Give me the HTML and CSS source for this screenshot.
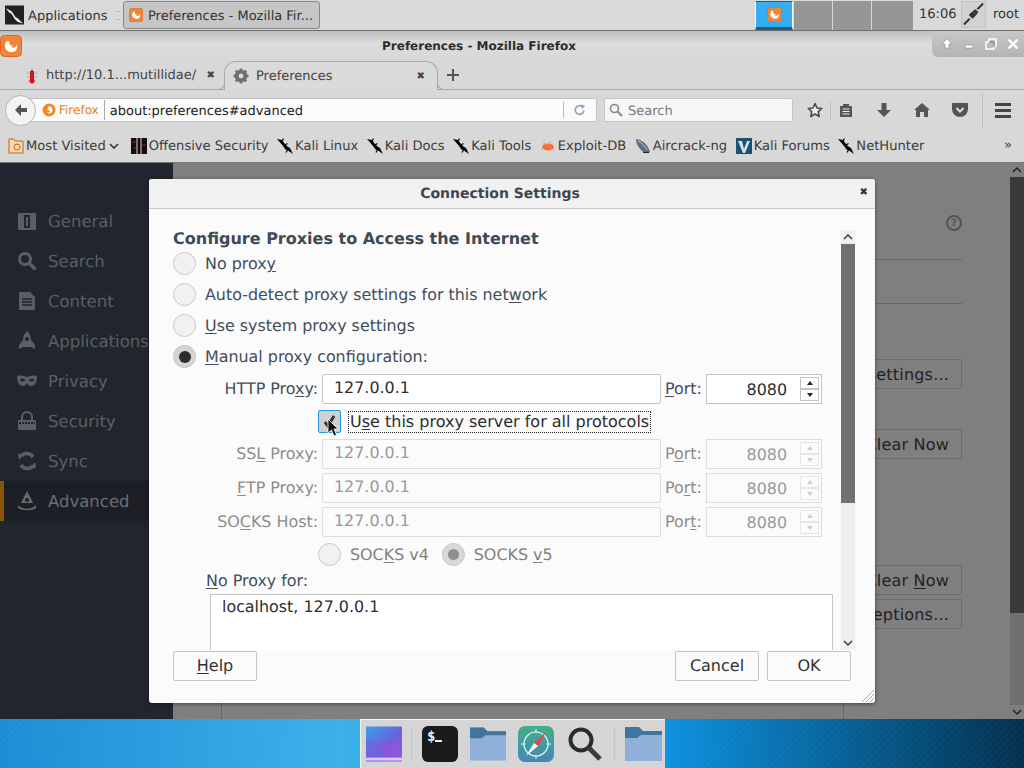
FILE: index.html
```html
<!DOCTYPE html>
<html lang="en">
<head>
<meta charset="utf-8">
<title>Preferences - Mozilla Firefox</title>
<link rel="stylesheet" href="styles.css">
</head>
<body>
<svg class="defs" width="0" height="0" aria-hidden="true">
  <symbol id="fx" viewBox="0 0 22 22">
    <rect x="0.5" y="0.5" width="21" height="21" rx="4" fill="#f0853a" stroke="#d9682a"/>
    <path d="M8 5C4.500 7 4 12 6.500 15c3 3 8 3 10-.5 1-1.800 1-3.500.3-5.200-.3 1.500-1 2.500-2 3-1.500.9-3.500.4-4-1 1 .4 2 .2 2.300-.6-1-.6-2.400-.8-3.200-.2-.2-1.300.2-3.100-1.900-5.500z" fill="#fff"/>
  </symbol>
  <symbol id="kali" viewBox="0 0 16 16">
    <path d="M0 1l5 1 3 4 2.500 2.500L13 10l3 6-5-3.500-2.500-1-2.500-3.500L3.500 5z" fill="#000"/>
    <path d="M5 3l1.500-2.500M8 7l2.500-1.500M10.500 12l-1.500 2.500" stroke="#000" stroke-width="1.200" fill="none"/>
  </symbol>
  <symbol id="folder" viewBox="0 0 37 36">
    <path d="M0 1h14l4 4h19v30H0z" fill="#8fb0d8"/>
    <path d="M0 1h14l4 4h19v4H16l-4 3H0z" fill="#3f759f"/>
  </symbol>
</svg>

<div class="desktop">
  <header class="panel">
    <div class="apps">
      <svg class="apps-icon" viewBox="0 0 20 20"><rect width="20" height="20" fill="#222"/><path d="M1 3l6 3 4 6 3 2 5 5-6-2-3-3-3-5-3-2z" fill="#eee"/></svg>
      <span>Applications</span>
    </div>
    <div class="grip"></div>
    <div class="task"><svg class="task-icon"><use href="#fx"/></svg><span>Preferences - Mozilla Fir...</span></div>
    <div class="pager">
      <div class="ws ws-on"><svg class="ws-icon"><use href="#fx"/></svg></div>
      <div class="ws"></div>
      <div class="ws"></div>
      <div class="ws ws-last"></div>
    </div>
    <div class="clock">16:06</div>
    <div class="plug"><svg viewBox="0 0 24 24" width="23" height="24"><path d="M22 1l-6 6M2 23l6-6" stroke="#333" stroke-width="2"/><path d="M7 13l4-4 4 4-4 4z" fill="#333"/><path d="M11 9l3-2 3 3-2 3z" fill="#333"/></svg></div>
    <div class="user">root</div>
  </header>

  <main class="window">
    <div class="titlebar">
      <svg class="title-icon"><use href="#fx"/></svg>
      <div class="title">Preferences - Mozilla Firefox</div>
      <div class="wm">
        <svg viewBox="0 0 12 12" width="12" height="12"><path d="M6 1l5 5H8v4H4V6H1z" fill="#fff" stroke="#777" stroke-width=".5"/></svg>
        <svg viewBox="0 0 12 12" width="12" height="12"><rect x="2" y="7" width="8" height="3" fill="#fff" stroke="#777" stroke-width=".5"/></svg>
        <svg viewBox="0 0 12 12" width="12" height="12"><path d="M4 1h7v7H9v3H1V4h3z" fill="none" stroke="#fff" stroke-width="1.500"/><path d="M4 4h5v5" fill="none" stroke="#777"/></svg>
        <svg viewBox="0 0 12 12" width="12" height="12"><path d="M1.500 1.500l9 9M10.500 1.500l-9 9" stroke="#fff" stroke-width="2.400"/></svg>
      </div>
    </div>

    <div class="tabs">
      <div class="tab">
        <svg class="tab-favicon" viewBox="0 0 12 16"><path d="M6 1v14" stroke="#444" stroke-width="1"/><path d="M1 5h10M1 9h10M2 13h8" stroke="#aaa"/><rect x="4" y="3" width="4" height="9" fill="#d81018"/><circle cx="6" cy="13" r="2.500" fill="#d81018"/></svg>
        <span class="tab-text">http://10.1...mutillidae/</span>
        <span class="tab-x">✖</span>
      </div>
      <div class="tab tab-on">
        <svg class="tab-favicon" viewBox="0 0 16 16"><circle cx="8" cy="8" r="4.800" fill="none" stroke="#707070" stroke-width="3.200"/><path d="M8 .5v15M.5 8h15M2.700 2.700l10.600 10.600M13.300 2.700L2.700 13.300" stroke="#707070" stroke-width="2.400"/><circle cx="8" cy="8" r="2.400" fill="#d9d9d9"/></svg>
        <span class="tab-text tab-text-on">Preferences</span>
        <span class="tab-x">✖</span>
      </div>
      <svg class="newtab" viewBox="0 0 12 12" width="12" height="12"><path d="M6 0v12M0 6h12" stroke="#555" stroke-width="2"/></svg>
    </div>

    <nav class="navbar">
      <div class="back"><svg viewBox="0 0 14 14" width="14" height="14"><path d="M7 1L1 7l6 6V9h6V5H7z" fill="#555"/></svg></div>
      <div class="urlbar">
        <svg class="id-icon" viewBox="0 0 14 14"><circle cx="7" cy="7" r="6.500" fill="#f08a1d"/><path d="M7 3a4 4 0 0 1 2.500 6.500A3.500 3.500 0 0 1 5 9.500c1.500.3 2.800-.5 3-1.800-1-.8-2-.5-2.500-.5 0-1.500.5-3 1.500-4.200z" fill="#fff"/></svg>
        <span class="id-text">Firefox</span>
        <span class="url">about:preferences#advanced</span>
        <span class="reload"><svg viewBox="0 0 14 14" width="12" height="12"><path d="M11.500 7.500A5 5 0 1 1 9.500 3" fill="none" stroke="#8ea4bb" stroke-width="2"/><path d="M8 .5L13 2l-3.500 4z" fill="#8ea4bb"/></svg></span>
      </div>
      <div class="searchbar">
        <svg viewBox="0 0 14 14" width="14" height="14"><circle cx="5.500" cy="5.500" r="4" fill="none" stroke="#888" stroke-width="1.600"/><path d="M8.500 8.500L13 13" stroke="#888" stroke-width="2"/></svg>
        <span>Search</span>
      </div>
      <div class="tools">
        <svg class="t-star" viewBox="0 0 16 16" width="16" height="16"><path d="M8 1.500l2 4.500 4.800.5-3.600 3.200 1 4.800L8 12l-4.200 2.500 1-4.800L1.200 6.500 6 6z" fill="#eee" stroke="#4a4a4a" stroke-width="1.600" stroke-linejoin="round"/></svg>
        <span class="t-sep"></span>
        <svg class="t-list" viewBox="0 0 14 14" width="14" height="14"><path d="M1 3h3V1h6v2h3v11H1z" fill="#555"/><path d="M3.500 6h7M3.500 8.500h7M3.500 11h7" stroke="#eee"/></svg>
        <svg class="t-down" viewBox="0 0 14 14" width="14" height="14"><path d="M4.500 0h5v7H14l-7 7-7-7h4.500z" fill="#555"/></svg>
        <svg class="t-home" viewBox="0 0 16 14" width="16" height="14"><path d="M8 0l8 7h-2v7h-4V9H6v5H2V7H0z" fill="#555"/></svg>
        <svg class="t-pocket" viewBox="0 0 16 14" width="16" height="14"><path d="M1 0h14a1 1 0 0 1 1 1v5a8 8 0 0 1-16 0V1a1 1 0 0 1 1-1z" fill="#555"/><path d="M4.500 5L8 8.500 11.500 5" fill="none" stroke="#ddd" stroke-width="2"/></svg>
        <span class="t-sep t-sep-2"></span>
        <div class="t-menu"><i></i><i></i><i></i></div>
      </div>
    </nav>

    <div class="bookmarks">
      <div class="bm bm-folder">
        <svg class="bm-icon" viewBox="0 0 16 16"><path d="M1 1h5l1 2h8v12H1z" fill="#f3d9b0" stroke="#c8601e"/><circle cx="9" cy="9" r="3" fill="none" stroke="#c8601e"/></svg>
        <span>Most Visited</span>
        <svg class="bm-chev" viewBox="0 0 10 6" width="10" height="6"><path d="M1 1l4 4 4-4" fill="none" stroke="#333" stroke-width="1.600"/></svg>
      </div>
      <div class="bm bm-os"><svg class="bm-icon" viewBox="0 0 16 16"><rect width="16" height="16" fill="#1a0b0b"/><path d="M6 0v16M10 0v16" stroke="#d8d8d8"/><path d="M1 4h4M11 7h4M2 10h3" stroke="#8a2020"/></svg><span>Offensive Security</span></div>
      <div class="bm"><svg class="bm-icon"><use href="#kali"/></svg><span>Kali Linux</span></div>
      <div class="bm"><svg class="bm-icon"><use href="#kali"/></svg><span>Kali Docs</span></div>
      <div class="bm"><svg class="bm-icon"><use href="#kali"/></svg><span>Kali Tools</span></div>
      <div class="bm"><svg class="bm-icon" viewBox="0 0 16 16"><ellipse cx="8" cy="9" rx="6" ry="3.500" fill="#f0713a"/><path d="M3 4l3 3M11 3L9 7M1 12l3-2M14 13l-3-3" stroke="#f0a070"/></svg><span>Exploit-DB</span></div>
      <div class="bm"><svg class="bm-icon" viewBox="0 0 16 16"><path d="M1 1c7 1 12 6 14 13-3 2-6 1-8-1C4 10 1 6 1 1z" fill="#5f6f80"/><path d="M3 3c4 2 7 5 9 9" stroke="#ccd" fill="none"/><path d="M8 14h6v1H8z" fill="#222"/></svg><span>Aircrack-ng</span></div>
      <div class="bm"><svg class="bm-icon" viewBox="0 0 16 16"><rect width="16" height="16" fill="#1d4f70"/><path d="M2 3h4l2 8 3-8h3l-5 12H7z" fill="#cfe2ee"/></svg><span>Kali Forums</span></div>
      <div class="bm"><svg class="bm-icon"><use href="#kali"/></svg><span>NetHunter</span></div>
      <div class="bm-more">»</div>
    </div>

    <div class="content">
      <aside class="sidebar">
        <div class="cat"><svg class="cat-icon" viewBox="0 0 20 20"><rect x="1" y="2" width="18" height="17" rx="1" fill="#5a5f64"/><rect x="7" y="4" width="6" height="13" fill="#21262e"/><rect x="9" y="6" width="2" height="9" fill="#5a5f64"/></svg><span>General</span></div>
        <div class="cat"><svg class="cat-icon" viewBox="0 0 20 20"><circle cx="8" cy="8" r="5.500" fill="none" stroke="#5a5f64" stroke-width="3"/><path d="M12 12l6.500 6.500" stroke="#5a5f64" stroke-width="3.400"/></svg><span>Search</span></div>
        <div class="cat"><svg class="cat-icon" viewBox="0 0 20 20"><path d="M2 1h11l5 5v13H2z" fill="#5a5f64"/><path d="M5 8h10M5 11h10M5 14h10" stroke="#21262e" stroke-width="1.500"/></svg><span>Content</span></div>
        <div class="cat"><svg class="cat-icon" viewBox="0 0 20 20"><path d="M10 0c3 3 4 6 4 9l4 5v4l-4-2H6l-4 2v-4l4-5c0-3 1-6 4-9z" fill="#5a5f64"/><circle cx="10" cy="8" r="2" fill="#21262e"/></svg><span>Applications</span></div>
        <div class="cat"><svg class="cat-icon" viewBox="0 0 20 20"><path d="M0 5c3-1 7 0 10 1 3-1 7-2 10-1 0 6-2 10-6 10-2 0-3-2-4-3-1 1-2 3-4 3-4 0-6-4-6-10z" fill="#5a5f64"/><ellipse cx="5.500" cy="9" rx="2.500" ry="1.500" fill="#21262e"/><ellipse cx="14.500" cy="9" rx="2.500" ry="1.500" fill="#21262e"/></svg><span>Privacy</span></div>
        <div class="cat"><svg class="cat-icon" viewBox="0 0 20 20"><path d="M5 9V6a5 5 0 0 1 10 0v3" fill="none" stroke="#5a5f64" stroke-width="2"/><rect x="1" y="9" width="18" height="10" rx="1" fill="#5a5f64"/><path d="M2 12h16" stroke="#21262e" stroke-width="2" stroke-dasharray="2 1"/></svg><span>Security</span></div>
        <div class="cat"><svg class="cat-icon" viewBox="0 0 20 20"><path d="M16 6A7.500 7.500 0 0 0 4 5M4 14a7.500 7.500 0 0 0 12 1" fill="none" stroke="#5a5f64" stroke-width="3.500"/><path d="M1 3l6 0-5 6zM19 17l-6 0 5-6z" fill="#5a5f64"/></svg><span>Sync</span></div>
        <div class="cat cat-on"><svg class="cat-icon" viewBox="0 0 20 20"><path d="M10 0L16 12H4z" fill="#666b70"/><path d="M1 14c4 5 14 5 18 0v3c-4 3-14 3-18 0z" fill="#666b70"/><circle cx="10" cy="9" r="2" fill="#1c2026"/></svg><span>Advanced</span></div>
      </aside>

      <section class="pane">
        <div class="pane-help"><span class="help-q">?</span></div>
        <div class="pane-rule pane-rule-1"></div>
        <div class="pane-rule pane-rule-2"></div>
        <div class="pane-btn pane-btn-1">Settings...</div>
        <div class="pane-btn pane-btn-2">Clear Now</div>
        <div class="pane-btn pane-btn-3">Clear <u>N</u>ow</div>
        <div class="pane-btn pane-btn-4">Exceptions...</div>
        <div class="pane-frame"></div>
      </section>

      <div class="page-scroll">
        <div class="ps-btn"><svg viewBox="0 0 10 6" width="10" height="6"><path d="M1 5l4-4 4 4" fill="none" stroke="#222" stroke-width="1.500"/></svg></div>
        <div class="ps-thumb"></div>
        <div class="ps-track"></div>
        <div class="ps-btn ps-btn-low"><svg viewBox="0 0 10 6" width="10" height="6"><path d="M1 1l4 4 4-4" fill="none" stroke="#222" stroke-width="1.500"/></svg></div>
      </div>
    </div>
  </main>

  <footer class="dock-row">
    <div class="dock">
      <svg class="d-icon d-wall" viewBox="0 0 37 36"><defs><linearGradient id="wall" x1="0" y1="0" x2="1" y2="1"><stop offset="0" stop-color="#3aa0f0"/><stop offset=".55" stop-color="#6a62d8"/><stop offset="1" stop-color="#a84fd8"/></linearGradient></defs><rect width="37" height="36" fill="url(#wall)"/><path d="M0 12l14 6 23-8v8L20 32H0z" fill="#7a5ce0" opacity=".55"/><path d="M14 18l6 14 17-14z" fill="#a050e0" opacity=".45"/><rect y="32" width="37" height="3" fill="#e0c8f4"/></svg>
      <span class="d-sep"></span>
      <svg class="d-icon" viewBox="0 0 36 36"><rect width="36" height="36" rx="6" fill="#1a1a1a"/><text x="5" y="15" class="d-term">$</text><rect x="13" y="14" width="7" height="2" fill="#eee"/></svg>
      <svg class="d-icon"><use href="#folder"/></svg>
      <svg class="d-icon" viewBox="0 0 36 36"><defs><linearGradient id="saf" x1="0" y1="0" x2="0" y2="1"><stop offset="0" stop-color="#43b088"/><stop offset="1" stop-color="#4a85b5"/></linearGradient></defs><rect width="36" height="36" rx="7" fill="url(#saf)"/><circle cx="18" cy="18" r="12" fill="none" stroke="#dff" stroke-width="1.200"/><path d="M18 3v4M18 29v4M3 18h4M29 18h4" stroke="#dff"/><path d="M28 6L16 17l4 3z" fill="#f04050"/><path d="M8 30l8-13 4 3z" fill="#fff"/></svg>
      <svg class="d-icon" viewBox="0 0 36 36"><circle cx="15" cy="14" r="10.500" fill="none" stroke="#2c2c2c" stroke-width="4"/><path d="M23 22l11 11" stroke="#3c3c3c" stroke-width="5"/></svg>
      <span class="d-sep"></span>
      <svg class="d-icon d-last"><use href="#folder"/></svg>
    </div>
  </footer>

  <div class="dialog">
    <div class="dlg-head">
      <span class="dlg-title">Connection Settings</span>
      <span class="dlg-close">✖</span>
    </div>
    <div class="dlg-scroll">
      <div class="dlg-body">
        <h2 class="dlg-h">Configure Proxies to Access the Internet</h2>
        <label class="radio-row"><span class="radio"></span><span>No prox<u>y</u></span></label>
        <label class="radio-row"><span class="radio"></span><span>Auto-detect proxy settings for this net<u>w</u>ork</span></label>
        <label class="radio-row"><span class="radio"></span><span><u>U</u>se system proxy settings</span></label>
        <label class="radio-row"><span class="radio radio-on"></span><span><u>M</u>anual proxy configuration:</span></label>

        <div class="proxy">
          <span class="p-label">HTTP Pro<u>x</u>y:</span>
          <span class="field">127.0.0.1</span>
          <span class="p-port"><u>P</u>ort:</span>
          <span class="spin"><span class="spin-v">8080</span><span class="spin-btns"><i class="up"></i><i class="dn"></i></span></span>

          <span class="p-check">
            <span class="check"><svg viewBox="0 0 21 21" width="21" height="21"><path d="M6 11l3 4 6-10" fill="none" stroke="#333" stroke-width="3"/></svg></span>
            <span class="check-text">U<u>s</u>e this proxy server for all protocols</span>
          </span>

          <span class="p-label off">SS<u>L</u> Proxy:</span>
          <span class="field off">127.0.0.1</span>
          <span class="p-port off">P<u>o</u>rt:</span>
          <span class="spin off"><span class="spin-v">8080</span><span class="spin-btns"><i class="up"></i><i class="dn"></i></span></span>

          <span class="p-label off"><u>F</u>TP Proxy:</span>
          <span class="field off">127.0.0.1</span>
          <span class="p-port off">Po<u>r</u>t:</span>
          <span class="spin off"><span class="spin-v">8080</span><span class="spin-btns"><i class="up"></i><i class="dn"></i></span></span>

          <span class="p-label off">SO<u>C</u>KS Host:</span>
          <span class="field off">127.0.0.1</span>
          <span class="p-port off">Por<u>t</u>:</span>
          <span class="spin off"><span class="spin-v">8080</span><span class="spin-btns"><i class="up"></i><i class="dn"></i></span></span>
        </div>

        <div class="socks">
          <label class="socks-opt"><span class="radio"></span><span>SOC<u>K</u>S v4</span></label>
          <label class="socks-opt"><span class="radio radio-off-on"></span><span>SOCKS <u>v</u>5</span></label>
        </div>
        <div class="noproxy"><u>N</u>o Proxy for:</div>
        <div class="textarea">localhost, 127.0.0.1</div>
      </div>
      <div class="dlg-bar">
        <div class="db-btn"><svg viewBox="0 0 10 6" width="10" height="6"><path d="M1 5l4-4 4 4" fill="none" stroke="#333" stroke-width="1.400"/></svg></div>
        <div class="db-thumb"></div>
        <div class="db-track"></div>
        <div class="db-btn"><svg viewBox="0 0 10 6" width="10" height="6"><path d="M1 1l4 4 4-4" fill="none" stroke="#333" stroke-width="1.400"/></svg></div>
      </div>
    </div>
    <div class="dlg-foot">
      <button class="btn"><u>H</u>elp</button>
      <span class="foot-gap"></span>
      <button class="btn">Cancel</button>
      <button class="btn">OK</button>
    </div>
    <svg class="resizer" viewBox="0 0 16 16" width="16" height="16"><path d="M15 3L3 15M15 7l-8 8M15 11l-4 4" stroke="#aaa"/></svg>
  </div>

  <svg class="cursor" viewBox="0 0 12 20" width="12" height="20"><path d="M1 1v14l3.500-3 2.500 6 2.500-1-2.500-6H11z" fill="#111" stroke="#fff" stroke-width=".8"/></svg>
</div>
</body>
</html>
```
FILE: styles.css
```css
* { box-sizing: border-box; }
html, body { margin: 0; padding: 0; width: 1024px; height: 768px; overflow: hidden; }
body { font-family: "DejaVu Sans", sans-serif; font-size: 14px; color: #333; text-rendering: geometricPrecision; }
.defs { position: absolute; }
u { text-underline-offset: 2px; }

.desktop {
  position: relative;
  width: 1024px;
  height: 768px;
  display: flex;
  flex-direction: column;
  background:
    repeating-linear-gradient(135deg, rgba(255,255,255,.025) 0 2px, rgba(255,255,255,0) 2px 5px),
    linear-gradient(90deg, #1a8ed4 0, #3bb0ea 340px, #0c92e0 665px, #02304d 1024px);
}

/* top panel */
.panel {
  height: 31px;
  flex: none;
  display: flex;
  align-items: stretch;
  background: #d9d9d9;
  border-bottom: 1px solid #6f6f6f;
  font-size: 13px;
  color: #333;
}
.apps { display: flex; align-items: center; padding-left: 5px; width: 116px; gap: 4px; }
.apps span, .task span { padding-top: 2px; }
.apps-icon { width: 19px; height: 20px; }
.grip { width: 4px; margin: 11px 3px 10px 0; border-top: 1px solid #bbb; border-bottom: 1px solid #bbb; }
.task {
  width: 197px;
  height: 28px;
  margin-top: 1px;
  display: flex;
  align-items: center;
  gap: 5px;
  padding-left: 5px;
  background: #c6c6c6;
  border: 1px solid #888;
  border-radius: 3px;
}
.task-icon { width: 14px; height: 14px; }
.pager { margin-left: 435px; display: flex; gap: 1px; height: 29px; margin-top: 1px; }
.ws { width: 38px; background: #969696; }
.ws-last { width: 41px; }
.ws-on { background: #34aef0; border: 1px solid #fff; border-bottom: 3px solid #1f5e8a; border-top-color: #1f5e8a; display: flex; align-items: center; justify-content: center; }
.ws-icon { width: 15px; height: 15px; }
.clock { margin-left: 6px; width: 36px; line-height: 30px; }
.plug { margin-left: 6px; width: 25px; height: 27px; margin-top: 1px; background: #d2d2d2; border: 1px solid #c4c4c4; }
.user { margin-left: 7px; line-height: 30px; }

/* window */
.window { height: 688px; flex: none; display: flex; flex-direction: column; background: #d8d8d8; }
.titlebar {
  height: 29px;
  flex: none;
  display: flex;
  align-items: flex-start;
  background: linear-gradient(#bdbdbd 0, #dcdcdc 40%, #d8d8d8 100%);
  font-size: 12px;
}
.title-icon { width: 22px; height: 22px; margin-top: 4px; }
.title { flex: 1; text-align: center; font-weight: bold; color: #2c2c2c; line-height: 30px; padding-left: 4px; }
.wm {
  width: 92px;
  height: 26px;
  display: flex;
  align-items: center;
  justify-content: space-between;
  padding: 0 5px 0 9px;
  background: linear-gradient(#c8c8c8, #b4b4b4);
  border-bottom-left-radius: 6px;
}

.tabs {
  height: 30px;
  flex: none;
  display: flex;
  align-items: stretch;
  border-bottom: 1px solid #a8a8a8;
  padding-left: 24px;
  font-size: 13px;
  color: #3a3a3a;
}
.tab { width: 200px; display: flex; align-items: center; position: relative; padding-top: 2px; }
.tab-favicon { width: 16px; height: 16px; flex: none; }
.tab-text { margin-left: 6px; flex: 1; white-space: nowrap; color: #444; }
.tab-x { font-size: 10px; color: #444; margin-right: 9px; }
.tab-on {
  width: 214px;
  padding: 0 0 0 8px;
  background: #dadada;
  border: 1px solid #a8a8a8;
  border-bottom: 0;
  border-radius: 12px 12px 0 0;
  height: 29px;
  margin-top: 1px;
  margin-bottom: -1px;
  z-index: 1;
}
.tab-on .tab-x { margin-right: 12px; }
.tab-on::before, .tab-on::after {
  content: "";
  position: absolute;
  bottom: 0;
  width: 7px;
  height: 7px;
  border-bottom: 1px solid #a8a8a8;
}
.tab-on::before { left: -8px; border-right: 1px solid #a8a8a8; border-bottom-right-radius: 7px; }
.tab-on::after { right: -8px; border-left: 1px solid #a8a8a8; border-bottom-left-radius: 7px; }
.tab-text-on { margin-left: 7px; }
.newtab { align-self: center; margin-left: 9px; }

.navbar {
  height: 38px;
  flex: none;
  display: flex;
  align-items: center;
  padding: 2px 0 0 5px;
  position: relative;
}
.back {
  width: 31px;
  height: 31px;
  flex: none;
  border-radius: 50%;
  background: #f4f4f4;
  border: 1px solid #b4b4b4;
  display: flex;
  align-items: center;
  justify-content: center;
  position: relative;
  z-index: 1;
}
.urlbar {
  width: 577px;
  height: 24px;
  margin-left: -16px;
  padding-left: 21px;
  background: #fbfbfb;
  border: 1px solid #c4c4c4;
  border-radius: 2px;
  display: flex;
  align-items: center;
  font-size: 13px;
}
.id-icon { width: 14px; height: 14px; flex: none; }
.id-text { color: #e8801c; font-size: 12px; margin-left: 3px; padding-right: 5px; border-right: 1px solid #aaa; line-height: 20px; }
.url { margin-left: 5px; flex: 1; color: #1c1c1c; padding-top: 2px; }
.reload { width: 33px; height: 16px; display: flex; align-items: center; justify-content: center; border-left: 1px solid #bbb; }
.searchbar {
  width: 189px;
  height: 24px;
  margin-left: 7px;
  background: #f6f6f6;
  border: 1px solid #c4c4c4;
  border-radius: 2px;
  display: flex;
  align-items: center;
  gap: 5px;
  padding-left: 4px;
  color: #7a7a7a;
  font-size: 13px;
}
.searchbar span { padding-top: 2px; }
.tools { display: flex; align-items: center; height: 36px; margin-left: 14px; }
.t-sep { width: 1px; height: 18px; background: #bdbdbd; margin-left: 7px; }
.t-list { margin-left: 8px; }
.t-down { margin-left: 24px; }
.t-home { margin-left: 23px; }
.t-pocket { margin-left: 22px; }
.t-sep-2 { height: 34px; margin-left: 14px; }
.t-menu { margin-left: 12px; width: 16px; display: flex; flex-direction: column; gap: 3px; }
.t-menu i { display: block; height: 3px; background: #444; }

.bookmarks {
  height: 35px;
  flex: none;
  display: flex;
  align-items: center;
  padding: 1px 0 0 8px;
  font-size: 13.1px;
  color: #3c3c3c;
  white-space: nowrap;
  border-bottom: 1px solid #777;
}
.bm { display: flex; align-items: center; gap: 2px; margin-right: 8.5px; }
.bm span { padding-top: 2px; }
.bm-icon { width: 16px; height: 16px; flex: none; }
.bm-chev { margin-left: 1px; margin-right: 3.500px; }
.bm-more { margin-left: auto; margin-right: 12px; font-size: 13px; }

.content { flex: 1; min-height: 0; display: flex; background: #7f7f7f; }
.sidebar { width: 173px; flex: none; background: #21262e; padding-top: 38px; color: #5a5f64; font-size: 16.5px; white-space: nowrap; overflow: hidden; }
.cat { height: 40px; display: flex; align-items: center; padding-left: 17px; gap: 11px; }
.cat-icon { width: 20px; height: 20px; flex: none; }
.cat-on { background: #1c2026; border-left: 4px solid #8a5500; padding-left: 13px; color: #6a6e73; }

.pane { flex: 1; display: flex; flex-direction: column; align-items: flex-end; padding: 52px 48px 0 48px; position: relative; }
.pane-help { height: 16px; }
.help-q { display: flex; width: 16px; height: 16px; border: 2px solid #555; border-radius: 50%; align-items: center; justify-content: center; font-size: 10px; font-weight: bold; color: #555; }
.pane-rule { height: 1px; width: 100%; background: #666; flex: none; }
.pane-rule-1 { margin-top: 28px; }
.pane-rule-2 { margin-top: 43px; }
.pane-btn { height: 30px; padding: 0 12px; border: 1px solid #6c6c6c; border-radius: 2px; font-size: 16px; line-height: 29px; color: #222; flex: none; letter-spacing: .2px; }
.pane-btn-1 { margin-top: 55px; }
.pane-btn-2 { margin-top: 40px; }
.pane-btn-3 { margin-top: 106px; }
.pane-btn-4 { margin-top: 4px; }
.pane-frame { margin-top: auto; width: 623px; height: 90px; align-self: flex-start; border-left: 1px solid #666; border-right: 1px solid #666; }

.page-scroll { width: 14px; flex: none; display: flex; flex-direction: column; }
.ps-btn { height: 14px; flex: none; display: flex; align-items: center; justify-content: center; background: #7f7f7f; }
.ps-thumb { height: 436px; background: #3a3a3a; }
.ps-track { flex: 1; background: #6f6f6f; }

/* dock */
.dock-row { flex: 1; display: flex; padding-left: 360px; }
.dock {
  width: 305px;
  height: 49px;
  background: #d5d5d5;
  border-top: 1px solid #f4f4f4;
  border-left: 1px solid #f4f4f4;
  display: flex;
  align-items: center;
  padding: 0 0 0 5px;
}
.d-icon { width: 36px; height: 36px; flex: none; margin-right: 12px; }
.d-wall { margin-right: 9px; }
.d-sep { width: 1px; height: 34px; background: #c4c4c4; margin-right: 10px; flex: none; }
.d-term { font-family: "DejaVu Sans Mono", monospace; font-size: 14px; font-weight: bold; fill: #eee; }
.d-last { margin-right: 0; width: 37px; }

/* dialog */
.dialog {
  position: absolute;
  left: 149px;
  top: 179px;
  width: 726px;
  height: 524px;
  background: #fbfbfb;
  border-radius: 3px;
  box-shadow: 0 1px 4px rgba(0,0,0,.45);
  display: flex;
  flex-direction: column;
  color: #424e5a;
  font-size: 15.9px;
}
.dlg-head {
  height: 30px;
  flex: none;
  background: #f1f1f1;
  border-bottom: 1px solid #c8c8c8;
  border-radius: 3px 3px 0 0;
  display: flex;
  align-items: center;
  justify-content: center;
  padding: 0 24px 0 0;
  position: relative;
}
.dlg-title { font-weight: bold; font-size: 14px; color: #3c4650; }
.dlg-close { position: absolute; right: 7px; top: 8px; font-size: 10px; color: #333; }
.dlg-scroll { height: 420px; margin: 21px 0 0 24px; width: 682px; flex: none; display: flex; overflow: hidden; }
.dlg-body { flex: 1; min-width: 0; overflow: hidden; }
.dlg-h { margin: 0; font-size: 16px; font-weight: bold; line-height: 18px; color: #3e4a56; }
.radio-row { display: flex; align-items: center; height: 31px; gap: 9px; }
.radio { width: 23px; height: 23px; flex: none; border-radius: 50%; background: #f1f1f1; border: 1px solid #c8c8c8; display: flex; align-items: center; justify-content: center; }
.radio-on { background: #d4d4d4; border-color: #c4c4c4; }
.radio-on::after { content: ""; width: 12px; height: 12px; border-radius: 50%; background: #2c2c2c; }
.radio-off-on { background: #d8d8d8; }
.radio-off-on::after { content: ""; width: 11px; height: 11px; border-radius: 50%; background: #8f8f8f; }

.proxy {
  display: grid;
  grid-template-columns: 149px 339px 45px 116px;
  grid-template-rows: 30px 27px 30px 30px 30px;
  row-gap: 4px;
  align-items: center;
  margin-top: 2px;
}
.p-label { text-align: right; padding: 0 4px 2px 0; white-space: nowrap; }
.p-port { padding: 0 0 2px 4px; white-space: nowrap; }
.off { color: #8c8c8c; }
.field { height: 30px; background: #fff; border: 1px solid #c4c4c4; border-radius: 2px; padding-left: 11px; line-height: 26px; color: #2e2e2e; }
.field.off { background: #fbfbfb; border-color: #dcdcdc; color: #999; line-height: 26px; }
.spin { height: 30px; background: #fff; border: 1px solid #c4c4c4; display: flex; align-items: center; justify-content: flex-end; color: #2e2e2e; }
.spin-v { margin-right: 13px; }
.spin-btns { display: flex; flex-direction: column; width: 19px; height: 24px; margin-right: 2px; }
.spin-btns i { flex: 1; border: 1px solid #c4c4c4; background: #fff; display: flex; align-items: center; justify-content: center; }
.spin-btns i::after { content: ""; border-left: 3px solid transparent; border-right: 3px solid transparent; }
.spin-btns .up::after { border-bottom: 4px solid #222; }
.spin-btns .dn::after { border-top: 4px solid #222; }
.spin.off { background: #fbfbfb; border-color: #dcdcdc; color: #999; }
.spin.off .spin-btns i { background: #fbfbfb; border-color: #e6e6e6; }
.spin.off .up::after { border-bottom-color: #ccc; }
.spin.off .dn::after { border-top-color: #ccc; }

.p-check { grid-column: 1 / -1; display: flex; align-items: center; padding-left: 145px; gap: 8px; height: 27px; }
.check { width: 23px; height: 23px; flex: none; background: #cfcfcf; border: 1px solid #1e9be0; border-radius: 2px; display: flex; align-items: center; justify-content: center; }
.check svg { width: 21px; height: 21px; }
.check-text { outline: 1px dotted #222; color: #2e2e2e; font-size: 16px; line-height: 20px; padding: 0 1px; white-space: nowrap; }

.socks { display: flex; margin: 4px 0 0 145px; height: 27px; align-items: center; gap: 13px; color: #7f7f7f; }
.socks-opt { display: flex; align-items: center; gap: 9px; }
.noproxy { margin: 3px 0 0 33px; line-height: 20px; }
.textarea { margin: 3px 0 0 37px; width: 623px; height: 120px; background: #fff; border: 1px solid #c4c4c4; border-bottom: 0; padding: 2px 11px; line-height: 20px; color: #2e2e2e; }

.dlg-bar { width: 14px; flex: none; display: flex; flex-direction: column; background: #eee; }
.db-btn { height: 14px; flex: none; display: flex; align-items: center; justify-content: center; background: #f0f0f0; }
.db-thumb { height: 259px; background: #717171; flex: none; }
.db-track { flex: 1; }

.dlg-foot { display: flex; padding: 1px 24px 0; gap: 8px; flex: none; }
.foot-gap { flex: 1; }
.btn { width: 84px; height: 30px; background: #fbfbfb; border: 1px solid #c4c4c4; border-radius: 2px; font: 16px "DejaVu Sans", sans-serif; color: #333; padding: 0 0 2px; text-rendering: geometricPrecision; }
.resizer { position: absolute; right: 0; bottom: 0; }

.cursor { position: absolute; left: 327px; top: 418px; }
```
